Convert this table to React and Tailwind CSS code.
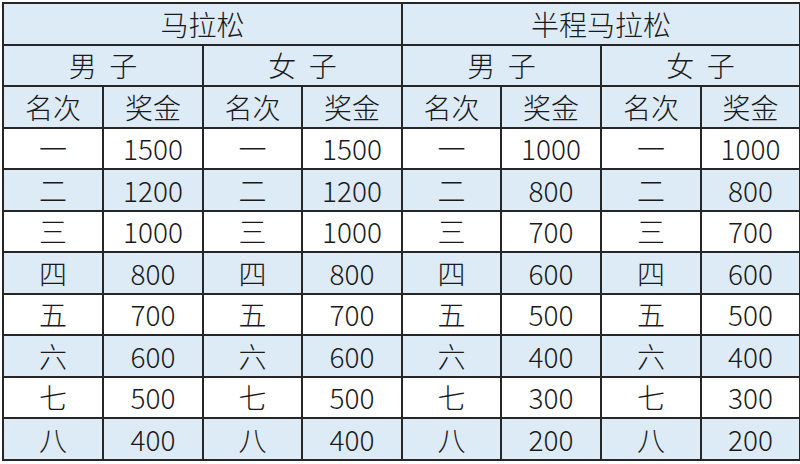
import { Fragment } from 'react'

const DATA = [
  ['一', '1500', '一', '1500', '一', '1000', '一', '1000'],
  ['二', '1200', '二', '1200', '二', '800', '二', '800'],
  ['三', '1000', '三', '1000', '三', '700', '三', '700'],
  ['四', '800', '四', '800', '四', '600', '四', '600'],
  ['五', '700', '五', '700', '五', '500', '五', '500'],
  ['六', '600', '六', '600', '六', '400', '六', '400'],
  ['七', '500', '七', '500', '七', '300', '七', '300'],
  ['八', '400', '八', '400', '八', '200', '八', '200'],
]

const cell = 'border-2 border-[#262626] text-center align-middle leading-none p-0'

export default function App() {
  return (
    <div className="w-[800px] h-[464px] bg-white pt-[2px] pl-[2px]">
      <table
        className="table-fixed border-collapse w-[797px] text-[28px] text-[#1a1a1a] font-light"
        style={{ fontFamily: '"Noto Sans CJK SC", "Noto Sans", sans-serif' }}
      >
        <colgroup>
          {[100, 100, 99, 100, 99, 100, 100, 99].map((w, i) => (
            <col key={i} style={{ width: w }} />
          ))}
        </colgroup>
        <tbody>
          <tr className="h-[41.5px] bg-[#ddebf7]">
            <td colSpan={4} className={cell}>马拉松</td>
            <td colSpan={4} className={cell}>半程马拉松</td>
          </tr>
          <tr className="h-[41.5px] bg-[#ddebf7]">
            <td colSpan={2} className={cell}>男&nbsp;&nbsp;子</td>
            <td colSpan={2} className={cell}>女&nbsp;&nbsp;子</td>
            <td colSpan={2} className={cell}>男&nbsp;&nbsp;子</td>
            <td colSpan={2} className={cell}>女&nbsp;&nbsp;子</td>
          </tr>
          <tr className="h-[41.5px] bg-[#ddebf7]">
            {[0, 1, 2, 3].map(i => (
              <Fragment key={i}>
                <td className={cell}>名次</td>
                <td className={cell}>奖金</td>
              </Fragment>
            ))}
          </tr>
          {DATA.map((row, r) => (
            <tr key={r} className={r % 2 === 1 ? 'h-[41.5px] bg-[#ddebf7]' : 'h-[41.5px] bg-white'}>
              {row.map((v, i) => (
                <td key={i} className={cell}>{v}</td>
              ))}
            </tr>
          ))}
        </tbody>
      </table>
    </div>
  )
}
